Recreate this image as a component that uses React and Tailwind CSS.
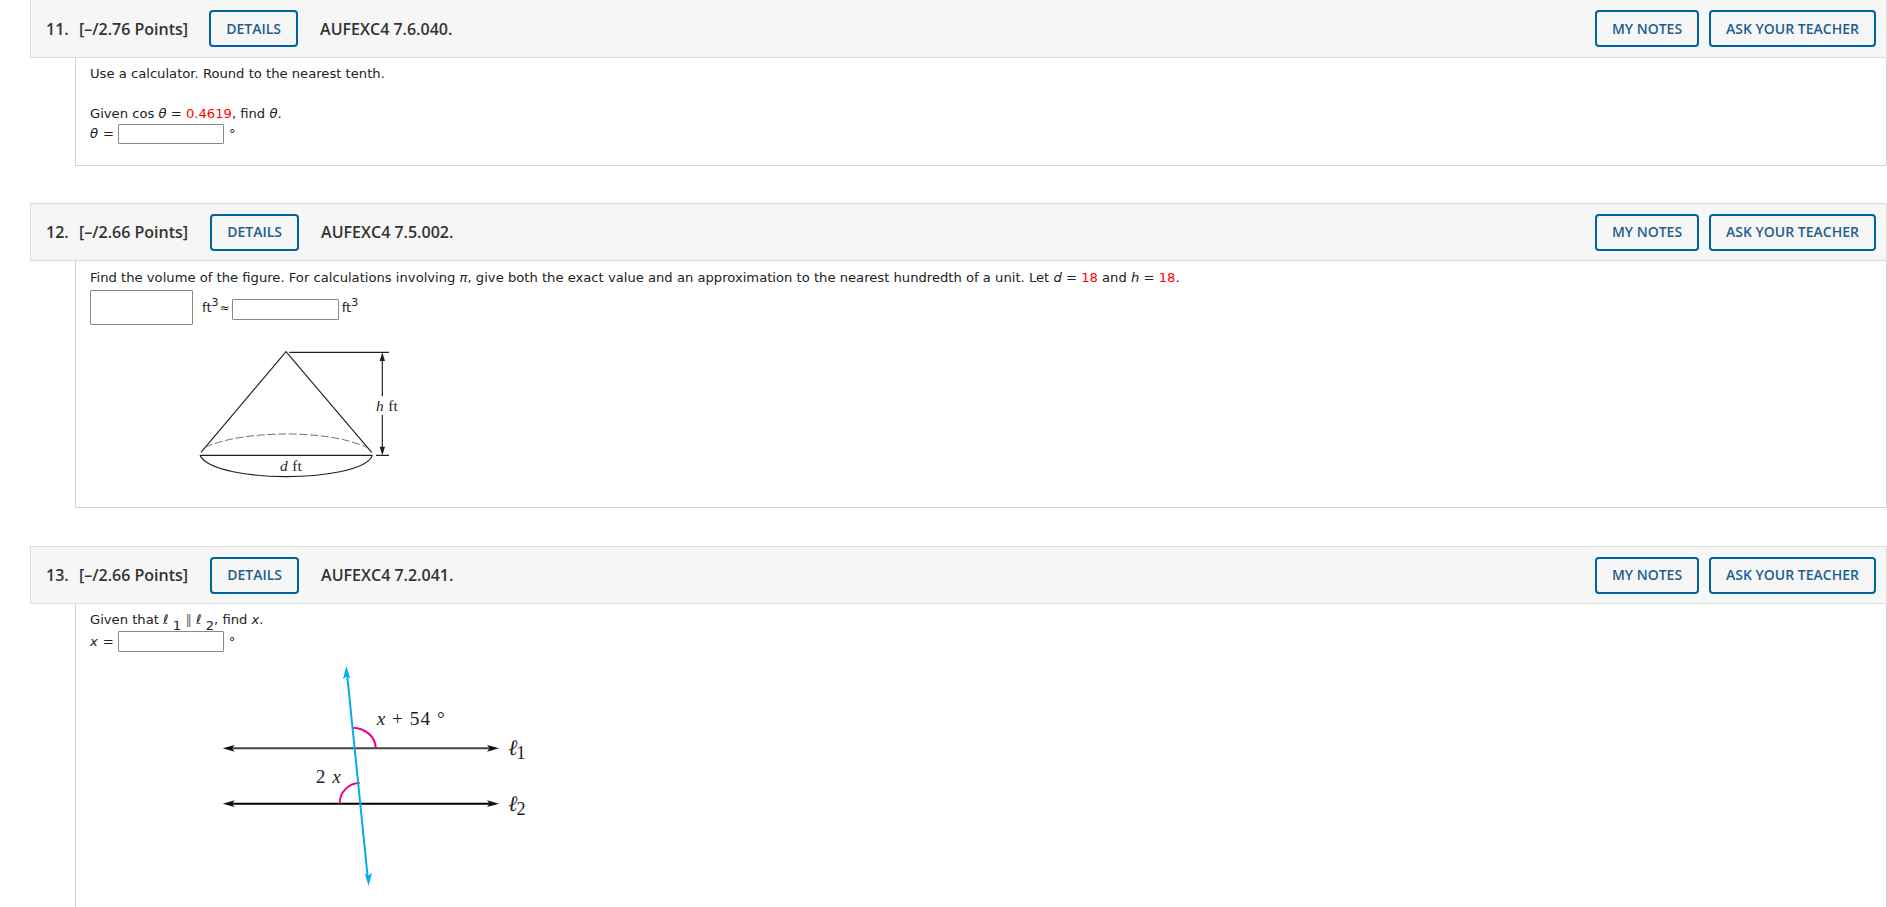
const BODY = "font-['DejaVu_Sans',sans-serif] text-[13.15px] leading-[18px] text-[#222]"

function HeaderButton({ children, className = '' }) {
  return (
    <button className={`flex h-[37px] items-center justify-center rounded-[4px] border-2 border-[#00639c] pb-px text-[14px] font-semibold text-[#1d5f8f] ${className}`}>
      {children}
    </button>
  )
}

function QuestionHeader({ num, points, code, top = true, detailsGap = 'ml-[22px]' }) {
  return (
    <div className={`flex h-[58px] items-center border-x border-b border-[#dcdcdc] bg-[#f6f6f6] pl-[15px] pr-[10px] font-['Open_Sans',sans-serif] text-[#333] ${top ? 'border-t' : 'border-t-0'}`}>
      <span className="w-[33px] text-[16px] font-semibold">{num}.</span>
      <span className="text-[16px] font-semibold">[–/{points} Points]</span>
      <HeaderButton className={`w-[89px] ${detailsGap}`}>DETAILS</HeaderButton>
      <span className="ml-[22px] text-[16px] font-semibold">{code}</span>
      <div className="ml-auto flex gap-[10px]">
        <HeaderButton className="w-[104px]">MY NOTES</HeaderButton>
        <HeaderButton className="w-[167px]">ASK YOUR TEACHER</HeaderButton>
      </div>
    </div>
  )
}

function Input({ className = '' }) {
  return <span className={`inline-block border border-[#8a8a8a] bg-white rounded-[1px] ${className}`} />
}

function ConeFigure() {
  return (
    <svg viewBox="0 0 780 480" className="ml-[80px] mt-[14px] h-[160px] w-[260px]">
      <g fill="none" stroke="#231f20" strokeWidth="3.5">
        <path d="M93 340 L348 38 L605 340" />
        <path d="M90 349 H607" />
        <path d="M90 349 C110 395 250 413 348 413 C450 413 590 395 607 349" />
        <path d="M105 325 C170 295 270 285 350 285 C440 285 530 297 590 325" strokeDasharray="24 8" strokeWidth="2.5" stroke="#555" />
        <path d="M358 40 H657 M618 349 H657" />
        <path d="M637 50 V172 M637 228 V340" />
      </g>
      <path d="M637 40 L629 66 H645 Z M637 349 L629 323 H645 Z" fill="#231f20" />
      <text x="618" y="215" fontFamily="'Liberation Serif', serif" fontSize="46" letterSpacing="1" fill="#231f20"><tspan fontStyle="italic">h</tspan> ft</text>
      <text x="330" y="396" fontFamily="'Liberation Serif', serif" fontSize="46" letterSpacing="1" fill="#231f20"><tspan fontStyle="italic">d</tspan> ft</text>
    </svg>
  )
}

function LinesFigure() {
  const serif = "'Liberation Serif', serif"
  return (
    <svg viewBox="0 30 1020 741" className="ml-[110px] mt-[8px] h-[247px] w-[340px]">
      <g strokeWidth="6" fill="none">
        <path d="M90 295 H880" stroke="#444" />
        <path d="M90 461 H880" stroke="#000" />
      </g>
      <path d="M68 295 L104 285 L96 295 L104 305 Z M897 295 L861 285 L869 295 L861 305 Z M68 461 L104 451 L96 461 L104 471 Z M897 461 L861 451 L869 461 L861 471 Z" fill="#111" />
      <path d="M456 233 C495 233 527 260 527 295" fill="none" stroke="#ec008c" strokeWidth="6" />
      <path d="M419 461 C419 425 447 399 479 399" fill="none" stroke="#ec008c" strokeWidth="6" />
      <path d="M441 70 L504 690" stroke="#00aeef" strokeWidth="6" fill="none" />
      <path d="M439 48 L451 86 L441 78 L429 88 Z M506 708 L494 670 L504 678 L516 668 Z" fill="#00aeef" />
      <g fontFamily={serif} fill="#222">
        <text x="530" y="224" fontSize="58" letterSpacing="3"><tspan fontStyle="italic">x</tspan> + 54 °</text>
        <text x="347" y="398" fontSize="58" letterSpacing="3">2 <tspan fontStyle="italic">x</tspan></text>
        <text x="925" y="316" fontSize="66" fontStyle="italic">ℓ<tspan fontStyle="normal" dy="12" dx="-3" fontSize="54">1</tspan></text>
        <text x="925" y="482" fontSize="66" fontStyle="italic">ℓ<tspan fontStyle="normal" dy="12" dx="-3" fontSize="54">2</tspan></text>
      </g>
    </svg>
  )
}

export default function App() {
  return (
    <div className="h-[907px] w-[1887px] overflow-hidden bg-white">
      <div className="ml-[30px]">
        <QuestionHeader num="11" points="2.76" code="AUFEXC4 7.6.040." top={false} detailsGap="ml-[21px]" />
        <div className={`ml-[45px] h-[108px] rounded-br-[3px] border-x border-b border-[#d2d2d2] pl-[14px] pt-[7px] ${BODY}`}>
          <p>Use a calculator. Round to the nearest tenth.</p>
          <p className="mt-[22px]">Given cos <i>θ</i> = <span className="text-[#ff0000]">0.4619</span>, find <i>θ</i>.</p>
          <div className="mt-px flex h-[20px] items-center">
            <i>θ</i>
            <span className="ml-[5px]">=</span>
            <Input className="ml-[4px] h-[20px] w-[106px]" />
            <span className="ml-[5px]">°</span>
          </div>
        </div>

        <div className="mt-[37px]">
          <QuestionHeader num="12" points="2.66" code="AUFEXC4 7.5.002." />
          <div className={`ml-[45px] h-[247px] border-x border-b border-[#d2d2d2] pl-[14px] pt-[8px] ${BODY}`}>
            <p>
              Find the volume of the figure. For calculations involving <i>π</i>, give both the exact value and an approximation to the nearest hundredth of a unit. Let <i>d</i> = <span className="text-[#ff0000]">18</span> and <i>h</i> = <span className="text-[#ff0000]">18</span>.
            </p>
            <div className="mt-[3px] flex h-[35px] items-center">
              <Input className="h-[35px] w-[103px]" />
              <span className="ml-[9px]">ft<sup className="text-[11px]">3</sup></span>
              <span className="ml-px text-[12px]">≈</span>
              <Input className="ml-[2px] mt-[3px] h-[21px] w-[107px]" />
              <span className="ml-[3px]">ft<sup className="text-[11px]">3</sup></span>
            </div>
            <ConeFigure />
          </div>
        </div>

        <div className="mt-[38px]">
          <QuestionHeader num="13" points="2.66" code="AUFEXC4 7.2.041." />
          <div className={`ml-[45px] h-[400px] border-x border-[#d2d2d2] pl-[14px] pt-[7px] ${BODY}`}>
            <p className="h-[18px]">
              Given that <i>ℓ</i> <span className="align-[-6px]">1</span> <span className="text-[#666]">∥</span> <i>ℓ</i> <span className="align-[-6px]">2</span>, find <i>x</i>.
            </p>
            <div className="mt-[2px] flex h-[21px] items-center">
              <i>x</i>
              <span className="ml-[5px]">=</span>
              <Input className="ml-[4px] h-[21px] w-[106px]" />
              <span className="ml-[5px]">°</span>
            </div>
            <LinesFigure />
          </div>
        </div>
      </div>
    </div>
  )
}
